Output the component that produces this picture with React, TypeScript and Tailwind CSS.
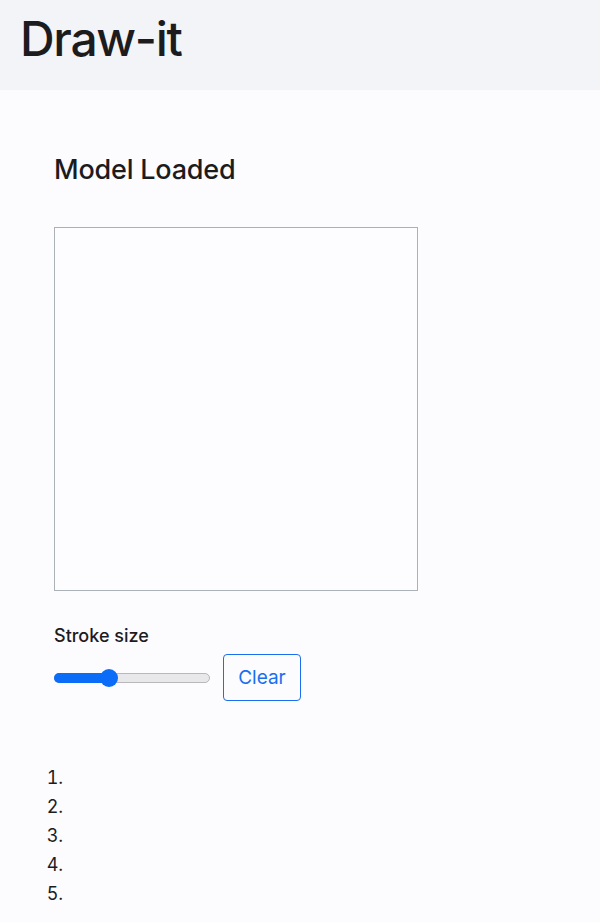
import { useState } from "react";

const font = { fontFamily: "Inter, 'Noto Sans', sans-serif" };

export default function App() {
  const [stroke, setStroke] = useState(35);

  return (
    <div className="min-h-[922px] bg-[#fcfbfe] text-[#1c1c1f]" style={font}>
      {/* Header */}
      <header className="h-[90px] bg-[#f3f4f7] px-5 pt-[10px]">
        <h1 className="text-[48px] font-medium leading-[1.2] tracking-[-1.3px]">Draw-it</h1>
      </header>

      <main className="px-[54px] pt-[64px]">
        <h2 className="text-[27px] font-medium leading-[1.2] tracking-[-0.2px]">Model Loaded</h2>

        {/* Canvas */}
        <div className="mt-[41px] h-[364px] w-[364px] border border-[#aab2b8] bg-[#fdfcff]" />

        <div className="mt-[31px] text-[18px] font-medium leading-[1.5]">Stroke size</div>

        <div className="mt-[5px] flex items-center gap-[13px]">
          <div className="relative h-[24px] w-[156px]">
            <div className="absolute left-0 right-0 top-[7px] h-[10px] rounded-full border border-[#b8b8bc] bg-[#e8e8ea]" />
            <div
              className="absolute left-0 top-[7px] h-[10px] rounded-l-full bg-[#0b6cf7]"
              style={{ width: `${stroke}%` }}
            />
            <div
              className="absolute top-[3px] h-[18px] w-[18px] -translate-x-1/2 rounded-full bg-[#0b6cf7]"
              style={{ left: `${stroke}%` }}
            />
            <input
              type="range"
              min={0}
              max={100}
              value={stroke}
              onChange={(e) => setStroke(Number(e.target.value))}
              className="absolute inset-0 w-full opacity-0"
            />
          </div>
          <button className="h-[47px] w-[78px] rounded-[4px] border border-[#1a6ef0] text-[19px] text-[#1a6ef0]">
            Clear
          </button>
        </div>

        <ol className="mt-[62px] list-decimal pl-[14px] text-[18px] leading-[29px]">
          {[1, 2, 3, 4, 5].map((n) => (
            <li key={n} className="pl-1">&nbsp;</li>
          ))}
        </ol>
      </main>
    </div>
  );
}
